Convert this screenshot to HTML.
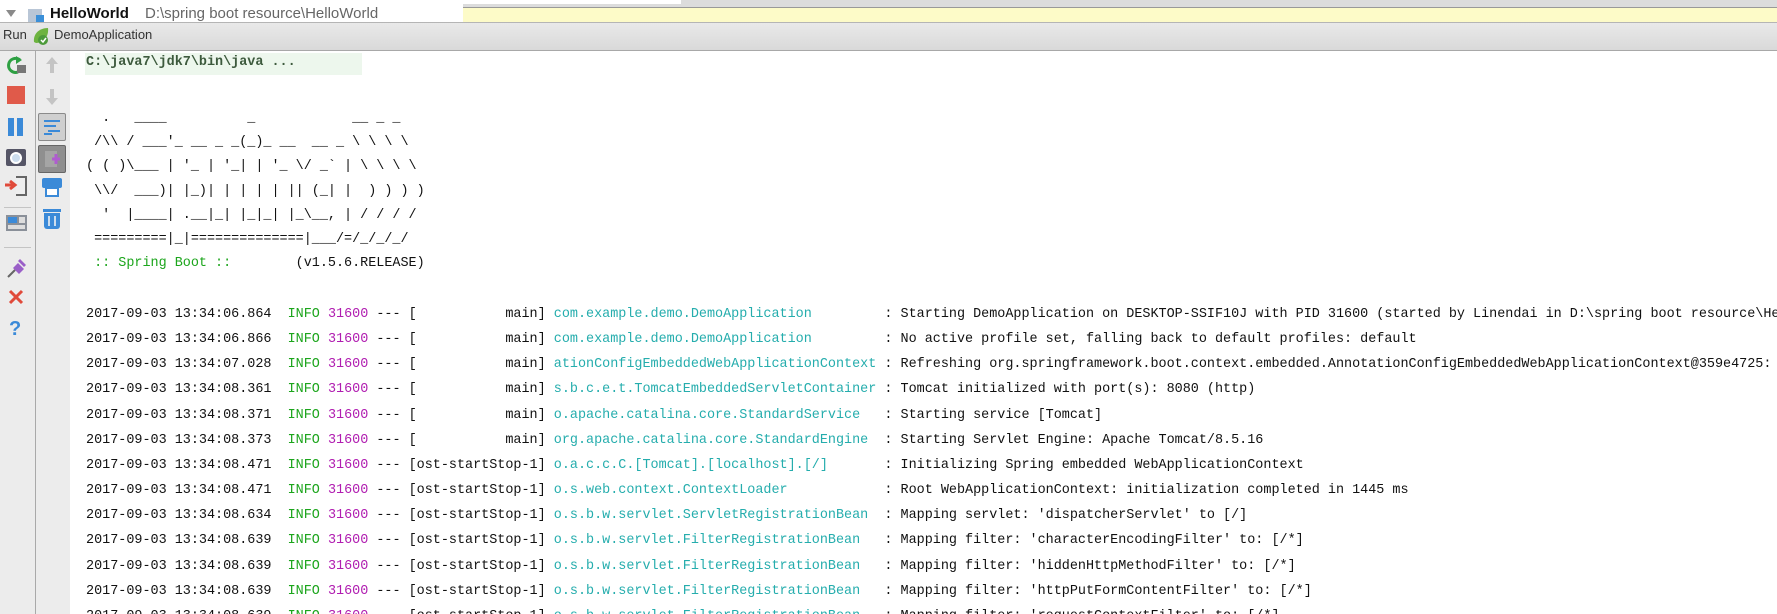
<!DOCTYPE html>
<html><head><meta charset="utf-8"><style>
*{margin:0;padding:0;box-sizing:border-box}
body{width:1777px;height:614px;overflow:hidden;background:#fff;position:relative;font-family:"Liberation Sans",sans-serif}
.a{position:absolute}
.clip{position:absolute;left:0;top:0;width:1777px;height:614px;overflow:hidden}
.m{font-family:"Liberation Mono",monospace;font-size:13.45px;white-space:pre;position:absolute;left:86px;color:#111}
.g{color:#1ca51c}.p{color:#b01cb0}.t{color:#25adad}
</style></head><body><div class="clip">
<!-- top project row -->
<div class="a" style="left:0;top:0;width:463px;height:22px;background:#fff;overflow:hidden">
 <div class="a" style="left:6px;top:10px;width:0;height:0;border-left:5px solid transparent;border-right:5px solid transparent;border-top:7px solid #8a8a8a"></div>
 <div class="a" style="left:28px;top:9px;width:14px;height:13px;background:#b9c6d6"></div>
 <div class="a" style="left:36px;top:15px;width:8px;height:7px;background:#3a8fd8"></div>
 <div class="a" style="left:50px;top:5px;font-size:15px;font-weight:bold;color:#111">HelloWorld</div>
 <div class="a" style="left:145px;top:5px;font-size:15px;color:#666">D:\spring boot resource\HelloWorld</div>
</div>
<div class="a" style="left:463px;top:0;width:1314px;height:8px;background:#dcdcdc;border-bottom:1px solid #999"></div>
<div class="a" style="left:463px;top:0;width:218px;height:4px;background:#fff"></div>
<div class="a" style="left:463px;top:8px;width:1314px;height:14px;background:#fdfbc8"></div>
<!-- run bar -->
<div class="a" style="left:0;top:22px;width:1777px;height:29px;background:linear-gradient(#e9e9e9,#d9d9d9);border-top:1px solid #b5b5b5;border-bottom:1px solid #a8a8a8"></div>
<div class="a" style="left:3px;top:27px;font-size:13px;color:#333">Run</div>
<svg class="a" style="left:31px;top:26px" width="20" height="20" viewBox="0 0 20 20"><path d="M3 16C2 8 8 2 17 2C18 10 13 17 5 17Z" fill="#6db33f"/><circle cx="12" cy="14" r="5" fill="#4c9a3a"/><path d="M10 14l2 2 3-4" stroke="#fff" stroke-width="1.5" fill="none"/></svg>
<div class="a" style="left:54px;top:27px;font-size:13px;color:#333">DemoApplication</div>
<!-- left toolbars -->
<div class="a" style="left:0;top:51px;width:70px;height:563px;background:#ececec"></div>
<div class="a" style="left:35px;top:51px;width:1px;height:563px;background:#a9a9a9"></div>
<div class="a" style="left:4px;top:207px;width:27px;height:1px;background:#c4c4c4"></div>
<div class="a" style="left:4px;top:247px;width:27px;height:1px;background:#c4c4c4"></div>
<!-- col1 icons -->
<svg class="a" style="left:6px;top:55px" width="22" height="20"><path d="M14 5A7 7 0 1 0 12 17" stroke="#2ea043" stroke-width="3" fill="none"/><path d="M10 1l6 4-6 4z" fill="#2ea043"/><rect x="11" y="10" width="9" height="8" fill="#777"/></svg>
<div class="a" style="left:7px;top:86px;width:18px;height:18px;background:#e05a4a"></div>
<div class="a" style="left:8px;top:118px;width:6px;height:18px;background:#3b8ad8"></div>
<div class="a" style="left:17px;top:118px;width:6px;height:18px;background:#3b8ad8"></div>
<div class="a" style="left:6px;top:149px;width:20px;height:17px;background:#556;border-radius:2px"></div>
<div class="a" style="left:10px;top:152px;width:12px;height:12px;background:#cde;border-radius:50%;border:2px solid #fff"></div>
<div class="a" style="left:16px;top:176px;width:11px;height:20px;border:2px solid #666;border-left:none;background:#eee"></div>
<svg class="a" style="left:4px;top:178px" width="16" height="14"><path d="M1 7h8M6 3l5 4-5 4" stroke="#e04a3a" stroke-width="3" fill="none"/></svg>
<div class="a" style="left:6px;top:215px;width:21px;height:16px;background:#8a9099"></div>
<div class="a" style="left:8px;top:217px;width:9px;height:6px;background:#3b8ad8"></div>
<div class="a" style="left:19px;top:217px;width:6px;height:6px;background:#ddd"></div>
<div class="a" style="left:8px;top:225px;width:17px;height:4px;background:#ddd"></div>
<svg class="a" style="left:6px;top:257px" width="22" height="22"><path d="M2 20l7-7" stroke="#666" stroke-width="2"/><path d="M7 11l5-5 6 6-5 5z" fill="#9a5fc8"/><path d="M12 4l6 6 2-2-6-6z" fill="#9a5fc8"/></svg>
<svg class="a" style="left:8px;top:289px" width="16" height="16"><path d="M2 2L14 14M14 2L2 14" stroke="#e04a3a" stroke-width="3"/></svg>
<div class="a" style="left:9px;top:318px;font-size:20px;font-weight:bold;color:#3b8ad8">?</div>
<!-- col2 icons -->
<svg class="a" style="left:44px;top:56px" width="16" height="18"><path d="M8 1L2 8h4v9h4V8h4z" fill="#c4c4c4"/></svg>
<svg class="a" style="left:44px;top:88px" width="16" height="18"><path d="M8 17L2 10h4V1h4v9h4z" fill="#c4c4c4"/></svg>
<div class="a" style="left:38px;top:113px;width:28px;height:28px;background:#cfcfcf;border:1px solid #8a8a8a;border-radius:2px"></div>
<svg class="a" style="left:42px;top:118px" width="20" height="18"><path d="M2 3h16M2 8h12M6 13h12M2 16h8" stroke="#3b8ad8" stroke-width="2"/></svg>
<div class="a" style="left:38px;top:145px;width:28px;height:28px;background:#8f8f8f;border:1px solid #666;border-radius:2px"></div>
<svg class="a" style="left:42px;top:149px" width="20" height="20"><rect x="3" y="2" width="12" height="16" fill="#a5a5a5"/><path d="M10 10h8M14 5v10" stroke="#b05cd0" stroke-width="3"/></svg>
<div class="a" style="left:42px;top:178px;width:20px;height:10px;background:#3b8ad8;border-radius:2px"></div>
<div class="a" style="left:45px;top:187px;width:14px;height:10px;background:#fff;border:2px solid #3b8ad8"></div>
<div class="a" style="left:43px;top:209px;width:18px;height:3px;background:#3b8ad8"></div>
<div class="a" style="left:44px;top:213px;width:16px;height:16px;background:#3b8ad8;border-radius:0 0 3px 3px"></div>
<div class="a" style="left:48px;top:216px;width:2px;height:10px;background:#cde"></div>
<div class="a" style="left:54px;top:216px;width:2px;height:10px;background:#cde"></div>
<!-- console -->
<div class="a" style="left:85px;top:53px;width:277px;height:22px;background:#edf7ed"></div>
<div class="m" style="top:55px;color:#3d5a3d;font-weight:bold">C:\java7\jdk7\bin\java ...</div>
<div class="m" style="top:107px;line-height:24.2px">  .   ____          _            __ _ _
 /\\ / ___'_ __ _ _(_)_ __  __ _ \ \ \ \
( ( )\___ | '_ | '_| | '_ \/ _` | \ \ \ \
 \\/  ___)| |_)| | | | | || (_| |  ) ) ) )
  '  |____| .__|_| |_|_| |_\__, | / / / /
 =========|_|==============|___/=/_/_/_/
<span class="g"> :: Spring Boot :: </span>       (v1.5.6.RELEASE)</div>
<div class="m" style="top:302px;line-height:25.15px">2017-09-03 13:34:06.864  <span class="g">INFO</span> <span class="p">31600</span> --- [           main] <span class="t">com.example.demo.DemoApplication        </span> : Starting DemoApplication on DESKTOP-SSIF10J with PID 31600 (started by Linendai in D:\spring boot resource\Hel
2017-09-03 13:34:06.866  <span class="g">INFO</span> <span class="p">31600</span> --- [           main] <span class="t">com.example.demo.DemoApplication        </span> : No active profile set, falling back to default profiles: default
2017-09-03 13:34:07.028  <span class="g">INFO</span> <span class="p">31600</span> --- [           main] <span class="t">ationConfigEmbeddedWebApplicationContext</span> : Refreshing org.springframework.boot.context.embedded.AnnotationConfigEmbeddedWebApplicationContext@359e4725: st
2017-09-03 13:34:08.361  <span class="g">INFO</span> <span class="p">31600</span> --- [           main] <span class="t">s.b.c.e.t.TomcatEmbeddedServletContainer</span> : Tomcat initialized with port(s): 8080 (http)
2017-09-03 13:34:08.371  <span class="g">INFO</span> <span class="p">31600</span> --- [           main] <span class="t">o.apache.catalina.core.StandardService  </span> : Starting service [Tomcat]
2017-09-03 13:34:08.373  <span class="g">INFO</span> <span class="p">31600</span> --- [           main] <span class="t">org.apache.catalina.core.StandardEngine </span> : Starting Servlet Engine: Apache Tomcat/8.5.16
2017-09-03 13:34:08.471  <span class="g">INFO</span> <span class="p">31600</span> --- [ost-startStop-1] <span class="t">o.a.c.c.C.[Tomcat].[localhost].[/]      </span> : Initializing Spring embedded WebApplicationContext
2017-09-03 13:34:08.471  <span class="g">INFO</span> <span class="p">31600</span> --- [ost-startStop-1] <span class="t">o.s.web.context.ContextLoader           </span> : Root WebApplicationContext: initialization completed in 1445 ms
2017-09-03 13:34:08.634  <span class="g">INFO</span> <span class="p">31600</span> --- [ost-startStop-1] <span class="t">o.s.b.w.servlet.ServletRegistrationBean </span> : Mapping servlet: 'dispatcherServlet' to [/]
2017-09-03 13:34:08.639  <span class="g">INFO</span> <span class="p">31600</span> --- [ost-startStop-1] <span class="t">o.s.b.w.servlet.FilterRegistrationBean  </span> : Mapping filter: 'characterEncodingFilter' to: [/*]
2017-09-03 13:34:08.639  <span class="g">INFO</span> <span class="p">31600</span> --- [ost-startStop-1] <span class="t">o.s.b.w.servlet.FilterRegistrationBean  </span> : Mapping filter: 'hiddenHttpMethodFilter' to: [/*]
2017-09-03 13:34:08.639  <span class="g">INFO</span> <span class="p">31600</span> --- [ost-startStop-1] <span class="t">o.s.b.w.servlet.FilterRegistrationBean  </span> : Mapping filter: 'httpPutFormContentFilter' to: [/*]
2017-09-03 13:34:08.639  <span class="g">INFO</span> <span class="p">31600</span> --- [ost-startStop-1] <span class="t">o.s.b.w.servlet.FilterRegistrationBean  </span> : Mapping filter: 'requestContextFilter' to: [/*]</div>
</div></body></html>
